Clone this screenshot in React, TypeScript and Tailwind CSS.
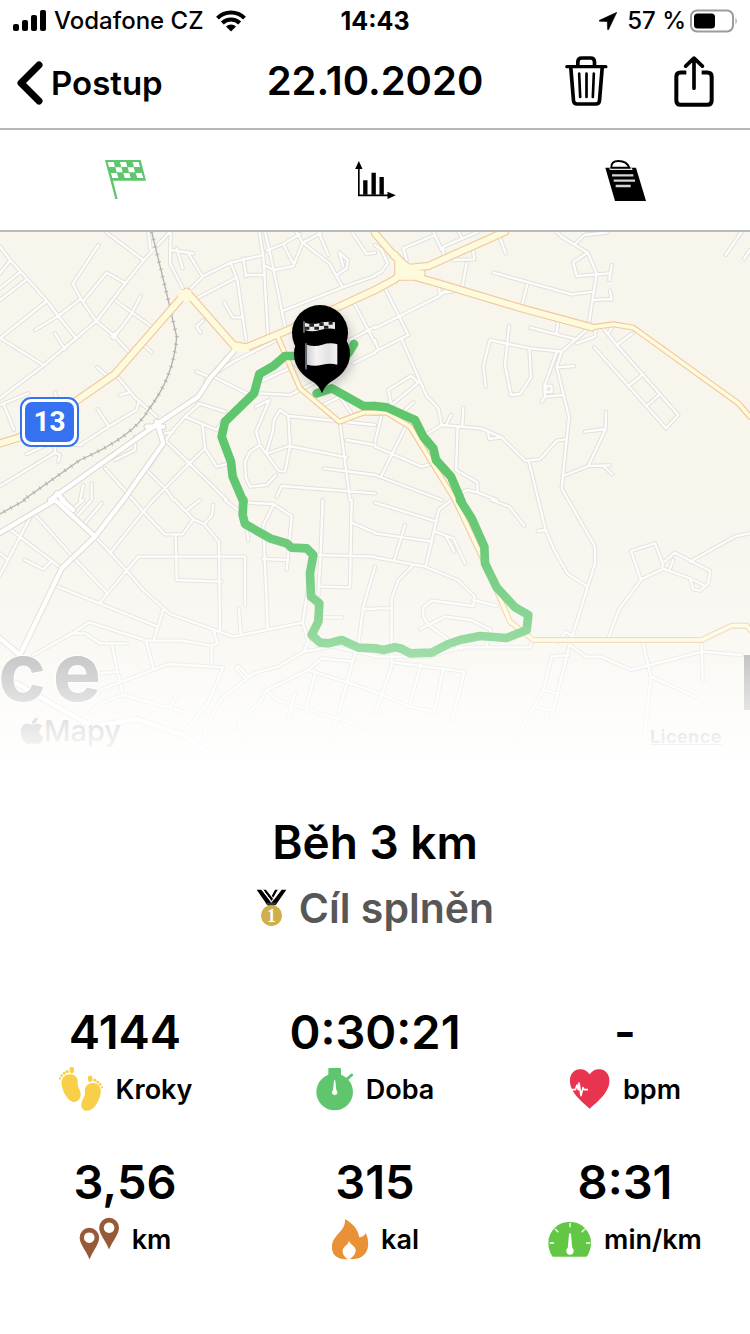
import type { ReactNode } from "react";

type Tile = {
  x: number;
  y: number;
  minor: string;
  wide?: string;
  small?: string;
  main?: string;
  rail?: string;
  route: string;
};

const tiles: Tile[] = [
  {
    x: 0,
    y: -6,
    minor:
      "M0 50L30 90L80 145L140 212L175 258L228 325M0 130L30 92M0 175L62 125M0 210L80 148M0 325L140 213M5 327L130 405M165 310L195 358M0 505L130 407L225 327L290 272L376 160L430 92L510 5M295 45L218 162L248 215L290 275L340 315L390 370M248 215L320 128L376 160M105 300L175 258L240 208M348 213L395 247L455 290M422 198L395 250L340 325M335 320L365 293M320 8L430 90M445 5L452 60M512 5L510 100L548 175M512 60L580 70M530 55L548 115M565 70L605 135M573 175L610 138L692 98L790 75M692 98L712 150L738 328M590 205L705 145M672 215L698 262H728M730 85L738 140M738 135H795M610 270L590 290L602 308M778 5L790 80L804 318M795 5L820 115L855 290M790 105L822 120L880 108L908 38L888 5M800 62L850 42L900 12M850 42L882 105M908 38L962 10M908 38L988 100L1028 172M955 5L985 75M1010 135L1040 115L1043 90L1018 68L1030 110M850 242L1028 172L1125 138M1055 5L1100 72L1125 68M1060 215L1105 300L1125 340M1050 330L1125 290M1060 400L1125 368M425 340L455 367M292 412L330 445M348 435L405 503L470 560M360 495L388 488M165 487L170 505M0 525L85 490M12 525L42 600M293 538L325 587M240 645L325 590L410 540L415 520M80 672L150 640L245 645M0 768L165 668L180 675L175 695M165 668V650M590 425L625 440L615 455M640 440L760 500M595 520L675 545M630 440L700 395L830 330M770 460L880 410M780 490L870 495L960 450M555 560L600 520M555 560L650 600L670 570M608 585L615 655L650 710L690 700M555 560L515 605L440 720M495 630L568 700L680 810M568 700L610 660M568 700L460 810M495 610L520 605M840 540L865 558L870 650L855 725L835 722L780 645L768 605L808 510L768 530M840 540L822 570L818 605L798 672M865 558L1125 585M798 672L868 648L1040 682M780 645L750 665L735 695L738 745L750 770L800 765L828 735M1020 580L1050 810M1040 630L1125 645M972 715L1125 735M830 800L845 768L1125 790M405 620V660L345 690M315 715L400 810M440 720L500 780L520 810M240 810L250 765M275 810V760M960 530L1020 500L1055 550",
    wide: "M150 810L460 590L595 500L630 445L700 365M470 575L490 640L370 810M440 590L490 590M170 790L190 810",
    small: "M835 325L900 475L1018 575L1090 548H1125",
    main: "M0 640L60 622L230 512L345 432L560 185L700 345L740 352L865 300L1125 180",
    rail: "M455 5L500 190L530 320Q522 440 445 540Q400 620 240 690L70 810",
    route:
      "M1062 342L1045 370L940 378H855L820 408L778 432L762 490L675 575L665 620L693 695L698 740L730 815M1125 528H1090L995 475L950 490",
  },
  {
    x: 1125,
    y: -6,
    minor:
      "M95 90L85 55L180 15M175 5L200 60M205 75V50L310 5M250 5L262 25M235 90L298 88L293 50M370 10L392 70M275 100L260 180M355 128L590 193L655 185M458 158L440 230M545 5L560 20L638 68L665 130L640 290M600 42L628 15L695 8M638 68L595 97L605 138L705 130M710 105L703 150M655 210L708 207M705 182L710 210M0 295L190 200L220 175M190 170L195 190L255 180M30 175L100 315L0 365M80 328L155 498L190 535L200 585M0 45L20 60L38 100L20 125L0 135M0 330L10 360M465 293L605 328M550 265L545 308M640 295L560 365L465 355L400 342L345 330L325 408L332 470M402 288L390 405L408 495L435 492L468 442L463 355M605 340L660 320L662 295M560 365L545 410L582 560L560 775L580 810M545 365L508 470L510 500L565 495M510 500L500 515M512 468h18v18h-18zM545 412L597 408M685 295L725 345L910 555L873 595L658 352M725 345L772 310M712 290L700 310M760 468L805 432M815 528L855 492M1100 5L1052 75M1125 60L1107 87M50 530L40 480L108 437L130 458L50 525M85 545L115 517M155 612L200 585L318 595L380 622L450 692L495 688L545 632L575 628M215 582L228 555M262 588L265 533M338 605L343 627L380 622M248 590L243 720L307 757L308 785M240 805L275 780L310 788L365 810M462 695L490 810M565 738L640 708L705 706M685 708L712 733M640 708L692 597L693 545M692 597L630 605M20 555L0 635M92 590L18 740M0 650L140 710L170 702M0 735L200 810",
    small: "M0 548H35L105 590L240 810M650 292L715 283L775 293L1090 520L1125 560",
    main: "M0 10L60 80L120 130M0 180L60 148L90 115L160 108L390 5M70 90V140L120 140L190 160L440 235L650 292M60 75L110 130M80 130H140",
    route: "M260 815L228 740L183 690L175 655L145 620L120 570L35 532L0 528",
  },
  {
    x: 0,
    y: 804,
    minor:
      "M400 0L430 35L495 103H548L580 58L525 0M460 0L430 35L330 160M580 58L612 72L635 48L640 15M612 72L657 125L660 395M562 30L600 0M285 110L328 155L378 210L430 270L510 342L700 410L908 368L940 160M100 38L220 172L320 278M30 88L185 205M92 50L0 225M0 160L22 178M75 180L130 208L152 185M735 315V170H415L298 310M168 258L298 310L468 378M527 103L530 240L665 245M490 328L462 418M100 465L225 395L268 367L438 422H545L635 437L652 430L642 395M215 400H255L300 430H380M335 432L368 585L300 610L250 660M635 437V490M438 422L460 503M300 570L505 492L670 502L625 605L550 700M300 520L350 515M368 585L550 635M510 620L530 585M717 325L722 400M740 85L745 120M675 0L720 35M820 15L790 75L803 385M745 8L820 12L875 48L860 208M788 177L865 180M968 0L962 160L955 285M1055 0L1050 260M960 260L1050 262M950 165L1125 170M1060 70L1125 98M1125 200L1090 320L1075 430M1090 327H1125M970 352H1027M908 368L925 425L910 455L835 500L760 520L660 600L615 690L610 740M910 455L1000 440L1125 468M740 540L708 505L715 497L745 530M800 570L925 510L1125 575M925 510L965 475L1060 485M1065 460L990 730M800 570L830 600L1125 690M800 570L780 605L715 670L740 730M945 520L920 620M885 580L865 655M215 30L250 0M230 50L270 5M250 75L305 10",
    wide: "M0 98L165 0M165 0L285 110M185 0L220 30M370 0L285 110L185 205L65 455M0 415L65 470M50 550L170 620L280 680L410 657L560 710L640 770",
    rail: "M75 0L0 42",
    route:
      "M730 0L728 45L735 72L810 115L860 130L875 143L920 145L940 165L930 220L933 290L958 310L955 365L935 405L960 428L985 430L1025 420L1075 443L1125 445",
  },
  {
    x: 1125,
    y: 804,
    minor:
      "M0 8L185 65M230 0L192 28L152 200M0 100L172 125M90 75L58 180M0 172L150 200L248 240L298 288L295 318L170 302L145 322V350L160 375L260 448M295 300L365 318M180 95L235 115L270 190M215 112L238 155M115 195L70 240L50 295V500L0 640M135 388L210 350L288 360L348 390L335 435M0 470H160L260 442L465 442L472 420M350 0L403 20L448 78M490 0L512 90L540 155L578 222L635 258M488 93L512 90M580 0L660 140V190L585 430L505 750M550 425L572 395L590 408M700 415L732 328L798 240L768 153L840 130L863 190L862 208L798 238M862 190L900 158L1005 213L1000 250L975 272L955 268L945 235L862 205M945 235L985 255M885 205L895 180M945 185L1083 108L1125 100M585 435L632 470H678L770 510L980 455L1100 465M803 425L828 530L808 710M828 530L960 590M980 425L983 543M580 465L530 470L505 570L415 730M505 570L545 580M478 620L535 633M55 487L268 515L233 660M138 492L103 620L0 575M205 505L178 635L103 620M0 325H50",
    small: "M240 0L330 190L405 365L475 420H980L1070 377H1115L1130 395",
    route:
      "M0 445L25 450L60 442L80 446L105 460L170 458L220 432L255 420L315 408L395 414L455 390L460 345L420 322L365 262L330 190L328 140L290 55L255 0",
  },
];

type RoadKind = "minor" | "wide" | "small" | "main" | "rail" | "route";

function Roads({ kind, color, width, dash }: { kind: RoadKind; color: string; width: number; dash?: string }) {
  return (
    <g fill="none" stroke={color} strokeWidth={width} strokeDasharray={dash} strokeLinejoin="round" strokeLinecap={dash ? "butt" : "round"}>
      {tiles.map((t) => (
        <path key={`${t.x}-${t.y}`} d={t[kind] ?? ""} transform={`translate(${t.x} ${t.y})`} />
      ))}
    </g>
  );
}

function RouteMap() {
  return (
    <section aria-label="Mapa" className="relative overflow-hidden bg-[#f8f5ed]">
      <svg viewBox="0 0 2250 1600" className="block w-full" aria-hidden="true">
        <defs>
          <linearGradient id="cloth" x1="0" x2="1">
            <stop offset="0" stopColor="#cfcfcf" />
            <stop offset="0.3" stopColor="#f4f4f4" />
            <stop offset="0.7" stopColor="#e2e2e2" />
            <stop offset="1" stopColor="#f2f2f2" />
          </linearGradient>
          <filter id="pinShadow" x="-30%" y="-30%" width="170%" height="170%">
            <feDropShadow dx="8" dy="12" stdDeviation="14" floodColor="#000" floodOpacity="0.2" />
          </filter>
        </defs>
        <Roads kind="minor" color="#e1e0dc" width={13} />
        <Roads kind="minor" color="#fdfdfc" width={7} />
        <Roads kind="rail" color="#b4b2ae" width={4} />
        <Roads kind="rail" color="#b4b2ae" width={12} dash="3 20" />
        <Roads kind="wide" color="#dcd7d0" width={19} />
        <Roads kind="wide" color="#ffffff" width={13} />
        <Roads kind="small" color="#f2c8a0" width={18} />
        <Roads kind="main" color="#f2c8a0" width={25} />
        <Roads kind="small" color="#fdfbdb" width={11} />
        <Roads kind="main" color="#fdfbdb" width={18} />
        <path d="M535 175h38l4 30-22 4-20-10zM690 330l50 12 10 18-50-2z" fill="#fdfbdb" />
        <Roads kind="route" color="#5fc66e" width={26} />
        <g filter="url(#pinShadow)">
          <circle cx="960" cy="303" r="84" />
          <path d="M966 282a84 84 0 0 0-84 84c0 42 30 68 58 84c14 9 20 20 26 34c6-14 12-25 26-34c28-16 58-42 58-84a84 84 0 0 0-84-84z" />
        </g>
        <path d="M912 268v34" stroke="#8d939b" strokeWidth="4" />
        <path d="M915 272q20 8 45 1t45-2v20q-20-4-45 3t-45 0z" fill="#e9e9e9" />
        <path d="M928 274h14v10h-14zM958 272h13v10h-13zM986 269h12v9h-12zM915 284h13v9h-13zM943 284h14v9h-14zM972 281h13v9h-13z" fill="#222" />
        <path d="M918 334v78" stroke="#737d88" strokeWidth="5" />
        <path d="M921 338q22 8 46 0t45-1v61q-22-6-45 0t-46 0z" fill="url(#cloth)" />
        <text y="1406" fill="#a2a2a2" stroke="#fff" strokeWidth="6" paintOrder="stroke" fontFamily="Inter, sans-serif" fontWeight="700" fontSize="244">
          <tspan x="-5">c</tspan>
          <tspan x="158">e</tspan>
        </text>
        <path d="M2232 1269h18v165h-18z" fill="#9e9e9e" />
      </svg>
      <div className="absolute left-5 top-[165px] flex h-[50px] w-[59px] items-center justify-center rounded-[11px] border-2 border-[#3572f2] bg-white p-[3px]">
        <span className="flex h-full w-full items-center justify-center rounded-[7px] bg-[#3572f2] font-['Liberation_Sans_Narrow','Roboto',sans-serif] text-[28px] font-bold leading-none text-white">13</span>
      </div>
      <div className="absolute bottom-4 left-5 flex items-center text-[#777]">
        <svg viewBox="0 0 384 480" className="h-7 w-6" fill="currentColor" aria-hidden="true">
          <path d="M318 252c0-40 18-68 52-90-20-28-50-43-88-46-37-3-78 22-93 22-16 0-52-21-81-21C49 118 0 163 0 255c0 27 5 55 15 84 13 38 61 130 111 129 26-1 45-19 79-19 33 0 50 19 79 19 51-1 94-85 107-123-68-32-73-91-73-93zM262 84c28-34 26-64 25-75-25 1-54 17-70 36-18 20-29 45-27 73 27 2 52-12 72-34z" />
        </svg>
        <span className="text-[29px] font-medium leading-9">Mapy</span>
      </div>
      <a href="#licence" className="absolute bottom-4 right-7 text-[18px] font-bold leading-6 tracking-wide text-[#777] underline">Licence</a>
      <div className="pointer-events-none absolute inset-0 bg-[linear-gradient(to_bottom,rgba(255,255,255,0)_46%,rgba(255,255,255,.1)_61%,rgba(255,255,255,.28)_73%,rgba(255,255,255,.42)_80%,rgba(255,255,255,.68)_88%,rgba(255,255,255,.85)_94%,#fff_100%)]" />
    </section>
  );
}

function StatusBar() {
  return (
    <div className="grid h-[42px] grid-cols-[1fr_auto_1fr] items-center px-3 text-[24px] font-medium leading-none">
      <div className="flex items-center gap-2 whitespace-nowrap">
        <svg viewBox="0 0 34 22" className="h-[22px] w-[34px] shrink-0" aria-hidden="true">
          <rect x="1" y="14" width="6" height="7" rx="2" />
          <rect x="10" y="10" width="6" height="11" rx="2" />
          <rect x="19" y="5" width="6" height="16" rx="2" />
          <rect x="28" y="0" width="6" height="21" rx="2" />
        </svg>
        <span>Vodafone CZ</span>
        <svg viewBox="0 0 30 22" className="ml-1 h-[22px] w-[30px] shrink-0" fill="none" stroke="#000" strokeWidth="4" aria-hidden="true">
          <path d="M1.500 8.200a19 19 0 0 1 27 0M6.300 13a12.300 12.300 0 0 1 17.400 0" />
          <path d="M10 16.500a7.200 7.200 0 0 1 10 0l-5 5z" fill="#000" stroke="none" />
        </svg>
      </div>
      <span className="text-center text-[25px] font-bold">14:43</span>
      <div className="flex items-center justify-end whitespace-nowrap">
        <svg viewBox="0 0 18 18" className="mr-2.5 h-[18px] w-[18px]" aria-hidden="true">
          <path d="M17.800 .3L.4 8.300c-.6.400-.4 1 .3 1l7.600.2.300 7.800c0 .7.700.8 1 .2z" stroke="#000" strokeWidth="0.600" />
        </svg>
        <span>57 %</span>
        <svg viewBox="0 0 48 24" className="ml-1 h-6 w-12" aria-hidden="true">
          <rect x="1" y="1.500" width="42" height="21" rx="6" fill="none" stroke="#9b9b9b" strokeWidth="2" />
          <rect x="4" y="4.500" width="21" height="15" rx="3.500" />
          <path d="M45.500 8.500q2.500 3.500 0 7z" fill="#9b9b9b" />
        </svg>
      </div>
    </div>
  );
}

function NavBar() {
  return (
    <header className="grid h-[88px] grid-cols-[1fr_auto_1fr] items-center border-b-2 border-[#b4baba] pb-2">
      <button type="button" className="ml-4 flex items-center gap-2 justify-self-start pt-1 text-[33px] font-semibold leading-10">
        <svg viewBox="0 0 27 44" className="h-11 w-[27px]" fill="none" stroke="#000" strokeWidth="7" strokeLinecap="round" strokeLinejoin="round" aria-hidden="true">
          <path d="M23 4L5 22L23 40" />
        </svg>
        Postup
      </button>
      <h1 className="text-[40px] font-semibold leading-[48px]">22.10.2020</h1>
      <div className="mr-9 flex items-center justify-end gap-[66px]">
        <button type="button" aria-label="Smazat">
          <svg viewBox="0 0 128 150" className="block h-[50px] w-[43px]" fill="none" stroke="#000" strokeWidth="11" strokeLinecap="round" strokeLinejoin="round" aria-hidden="true">
            <path d="M5 32H122" strokeWidth="10" />
            <path d="M38 30V18q0-12 12-12h26q12 0 12 12v12M17 36l8 98q1 10 11 10h56q10 0 11-10l8-98" />
            <path d="M42 53l3 70M64 53v70M86 53l-3 70" strokeWidth="8" />
          </svg>
        </button>
        <button type="button" aria-label="Sdílet">
          <svg viewBox="0 0 120 152" className="block h-[51px] w-10" fill="none" stroke="#000" strokeWidth="12" strokeLinecap="round" strokeLinejoin="round" aria-hidden="true">
            <path d="M37 49H20q-13 0-13 13v71q0 13 13 13h80q13 0 13-13V62q0-13-13-13H83" strokeLinecap="butt" />
            <path d="M60 96V7M35 30L60 6L85 30" strokeWidth="11" />
          </svg>
        </button>
      </div>
    </header>
  );
}

function Tabs() {
  return (
    <nav aria-label="Zobrazení" className="grid h-[102px] grid-cols-3 border-b-2 border-[#b8babd]">
      <button type="button" aria-label="Trasa" className="flex items-center justify-center">
        <svg viewBox="75 60 123 120" className="h-10 w-[41px]" aria-hidden="true">
          <path d="M75 60H182L198 122H99L113 177H106z" fill="#5fc66e" />
          <path d="M83 66h18l4 15H87zM120 66h18l4 15h-18zM158 66h18l4 15h-18zM106 82h18l4 15h-18zM143 82h18l4 15h-18zM93 99h18l4 15H97zM130 99h18l4 15h-18zM167 99h18l5 15h-18z" fill="#fff" />
        </svg>
      </button>
      <button type="button" aria-label="Grafy" className="flex items-center justify-center">
        <svg viewBox="825 60 122 114" className="h-[38px] w-[41px]" aria-hidden="true">
          <path d="M836 80V163H925" fill="none" stroke="#000" strokeWidth="5" />
          <path d="M836 60l11 24h-22zM947 163l-25 11v-22zM849 118h13v43h-13zM874 95h13v66h-13zM898 108h13v53h-13z" />
        </svg>
      </button>
      <button type="button" aria-label="Poznámky" className="flex items-center justify-center">
        <svg viewBox="135 57 123 123" className="h-[41px] w-[41px]" aria-hidden="true">
          <path d="M136 80H228L258 180H165z" />
          <path d="M148 81H215L218 87H150z" fill="#e8e8e8" />
          <path d="M154 80q-2-20 22-20q24 0 32 20z" fill="#fff" stroke="#000" strokeWidth="6" />
          <path d="M156 103H220M161 119H225M167 135H212" stroke="#d5d5d5" strokeWidth="7" />
        </svg>
      </button>
    </nav>
  );
}

function MedalIcon() {
  return (
    <svg viewBox="0 0 94 114" className="h-[38px] w-[31px]" aria-hidden="true">
      <path d="M2 2h14l32 40-5 6h-9zM22 2h8l24 30-5 6zM48 20l10-18h8L52 26zM92 2L60 48h-9l-4-6L78 2z" />
      <path d="M20 2L46 38M70 2L46 40" stroke="#fff" strokeWidth="3" />
      <path d="M28 41h36l-9 9H37z" fill="#333" />
      <circle cx="47" cy="80" r="32" fill="#cfae4b" />
      <text x="47" y="98" textAnchor="middle" fill="#fff" fontFamily="Liberation Serif, serif" fontWeight="700" fontSize="54">1</text>
    </svg>
  );
}

const stats: { value: string; label: string; icon: ReactNode }[] = [
  {
    value: "4144",
    label: "Kroky",
    icon: (
      <svg viewBox="55 199 138 140" className="h-[46px] w-[46px]" fill="#f8cf48" aria-hidden="true">
        <path d="M65 252c-3-20 12-32 27-31c17 1 24 13 22 27c-1 14 10 22 9 37c-1 15-15 25-29 18c-14-8-26-30-29-51zM184 277c3-19-11-31-25-29c-17 1-25 13-23 27c2 14-9 22-11 37c-2 16 14 25 28 18c15-9 28-32 31-53z" />
        <ellipse cx="96" cy="208" rx="7" ry="10" />
        <circle cx="82" cy="213" r="5" />
        <circle cx="73" cy="218" r="4.500" />
        <circle cx="65" cy="225" r="4" />
        <circle cx="60" cy="234" r="3.500" />
        <ellipse cx="152" cy="235" rx="7" ry="10" />
        <circle cx="166" cy="239" r="5" />
        <circle cx="175" cy="245" r="4.500" />
        <circle cx="182" cy="252" r="4" />
        <circle cx="188" cy="261" r="3.500" />
      </svg>
    ),
  },
  {
    value: "0:30:21",
    label: "Doba",
    icon: (
      <svg viewBox="830 199 114 138" className="h-[46px] w-[38px]" fill="#5fc66e" aria-hidden="true">
        <circle cx="886" cy="274" r="55" />
        <path d="M867 205q0-3 3-3h32q3 0 3 3v22h-38z" />
        <path d="M920 238l17-15" stroke="#5fc66e" strokeWidth="9" strokeLinecap="round" />
        <path d="M884 240q2-4 4 0l3 30h-10z" fill="#fff" />
        <circle cx="886" cy="275" r="8" fill="#fff" />
      </svg>
    ),
  },
  {
    value: "-",
    label: "bpm",
    icon: (
      <svg viewBox="299 200 126 138" className="h-[46px] w-[42px]" aria-hidden="true">
        <path d="M361 222c8-12 20-17 32-15c20 3 29 20 27 40c-3 28-30 53-59 78c-29-25-56-50-59-78c-2-20 7-37 27-40c12-2 24 3 32 15z" fill="#e8344e" />
        <path d="M308 268h10l5-14 4 14 2-20 6 38 6-24 3 6h12" fill="none" stroke="#fff" strokeWidth="5" strokeLinejoin="round" />
      </svg>
    ),
  },
  {
    value: "3,56",
    label: "km",
    icon: (
      <svg viewBox="117 650 124 138" className="h-[46px] w-[41px]" fill="#985938" fillRule="evenodd" aria-hidden="true">
        <path d="M148 682a30 30 0 0 1 30 30c0 20-20 40-29 66c-9-26-30-46-30-66a30 30 0 0 1 29-30zM148 696a16 16 0 1 0 .1 0z" />
        <path d="M208 652a30 30 0 0 1 30 30c0 20-20 40-30 66c-9-26-30-46-30-66a30 30 0 0 1 30-30zM208 666a16 16 0 1 0 .1 0z" />
      </svg>
    ),
  },
  {
    value: "315",
    label: "kal",
    icon: (
      <svg viewBox="877 650 114 138" className="h-[46px] w-[38px]" aria-hidden="true">
        <path d="M919 657c24 12 39 31 43 54c9 0 16-6 19-13c6 12 9 25 7 40c-2 21-18 36-40 38c-8 1-14 0-18 0c-34 4-52-12-50-38c2-36 42-44 39-81z" fill="#e99136" />
        <path d="M929 777c-12-6-18-16-17-28c3-12 16-14 19-28c5 14 18 14 20 27c1 11-8 24-22 29z" fill="#fff" />
      </svg>
    ),
  },
  {
    value: "8:31",
    label: "min/km",
    icon: (
      <svg viewBox="236 649 132 138" className="h-[46px] w-11" aria-hidden="true">
        <path d="M250 768q-13-18-13-41a64 64 0 0 1 128 0q0 23-13 41z" fill="#62c744" />
        <path d="M302 666v14M257 685l10 10M347 685l-10 10M241 727h13M363 727h-13" stroke="#fff" strokeWidth="4" />
        <path d="M299 700q3-5 6 0l4 46h-14z" fill="#fff" />
        <circle cx="302" cy="751" r="11" fill="#fff" />
      </svg>
    ),
  },
];

export default function App() {
  return (
    <main className="min-h-screen bg-white pb-12 font-['Inter',sans-serif] text-black">
      <StatusBar />
      <NavBar />
      <Tabs />
      <RouteMap />
      <section className="flex flex-col items-center pt-[47px]">
        <h2 className="text-[46px] font-semibold leading-[60px]">Běh 3 km</h2>
        <p className="flex items-center gap-3 pt-1 text-[41px] font-semibold leading-[64px] text-[#575757]">
          <MedalIcon />
          Cíl splněn
        </p>
      </section>
      <dl className="grid grid-cols-3 gap-y-[34px] pt-[62px]">
        {stats.map((s) => (
          <div key={s.label} className="flex flex-col-reverse items-center">
            <dt className="flex h-14 items-center gap-3 text-[27px] font-semibold leading-9">
              {s.icon}
              {s.label}
            </dt>
            <dd className="text-[47px] font-semibold leading-[60px]">{s.value}</dd>
          </div>
        ))}
      </dl>
    </main>
  );
}
